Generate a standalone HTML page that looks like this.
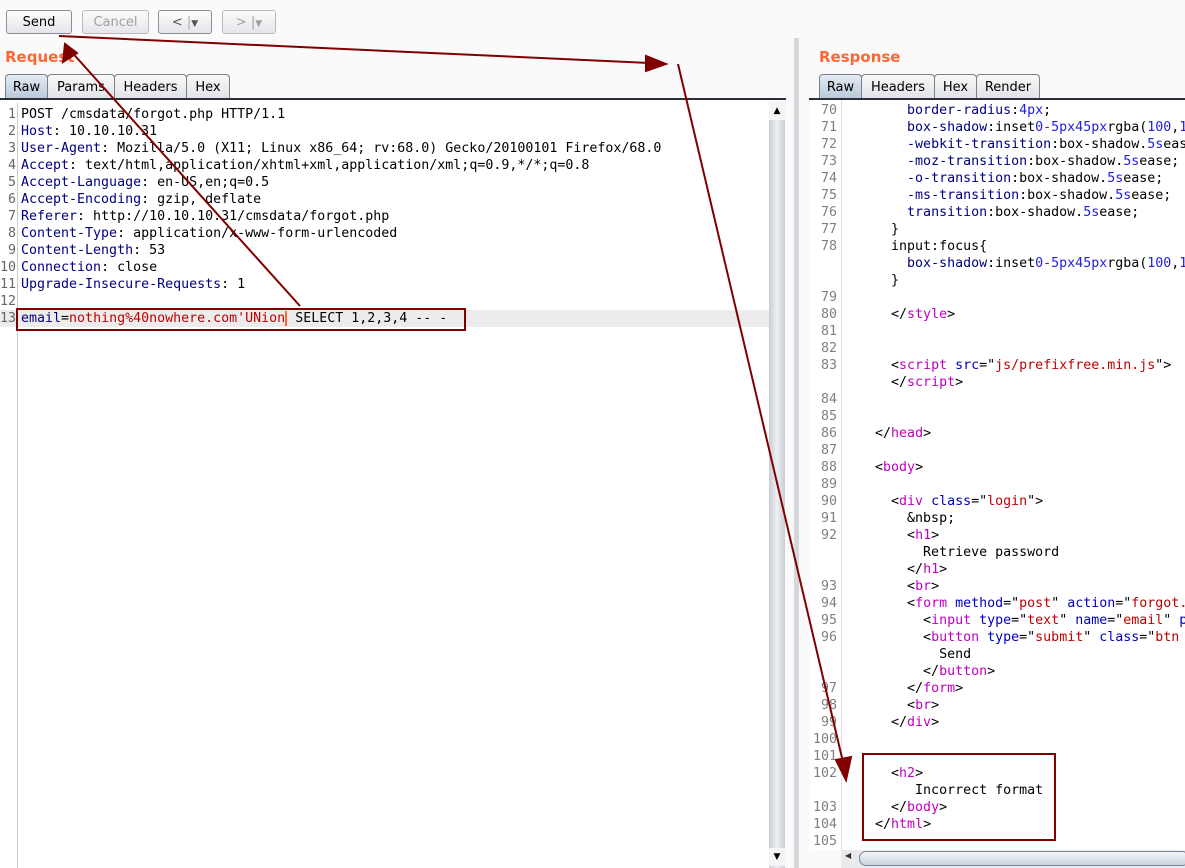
<!DOCTYPE html>
<html><head><meta charset="utf-8"><style>
*{margin:0;padding:0;box-sizing:border-box}
body{width:1185px;height:868px;background:#fafafa;font-family:"DejaVu Sans","Liberation Sans",sans-serif;position:relative;overflow:hidden;font-size:13px;color:#000}
.btn{position:absolute;top:10px;height:24px;border:1px solid #8a8f97;border-radius:3px;background:linear-gradient(#fcfcfc,#e4e6ea);font-size:13px;text-align:center;line-height:24px}
.dis{color:#a0a0a0;border-color:#b8bcc2}
.h{position:absolute;top:48px;color:#ff6633;font-weight:bold;font-size:15px}
.tab{position:absolute;top:74px;height:25px;border:1px solid #7a7f88;border-bottom:none;border-radius:4px 4px 0 0;background:linear-gradient(#fafafa,#e0e2e6);font-size:13px;line-height:26px;text-align:center}
.sel{background:linear-gradient(#e4ecf4,#b7c8d8)}
.code{position:absolute;font-family:"DejaVu Sans Mono","Liberation Mono",monospace;font-size:13.3px;line-height:17px;white-space:pre}
.k{color:#000080}.n{color:#2020e0}.t{color:#c000c0}.a{color:#0000c0}.v{color:#c00000}
.num{color:#666;text-align:right}
</style></head><body>
<div class="btn" style="left:6px;width:66px">Send</div>
<div class="btn dis" style="left:82px;width:67px">Cancel</div>
<div class="btn" style="left:158px;width:54px;color:#555">&lt; <span style="color:#aaa">|</span><span style="font-size:9px">▼</span></div>
<div class="btn dis" style="left:222px;width:54px">&gt; |<span style="font-size:9px">▼</span></div>

<div class="h" style="left:5px">Request</div>
<div class="tab sel" style="left:5px;width:43px">Raw</div>
<div class="tab" style="left:47px;width:68px">Params</div>
<div class="tab" style="left:114px;width:73px">Headers</div>
<div class="tab" style="left:186px;width:44px">Hex</div>
<div style="position:absolute;left:0;top:98px;width:786px;height:2px;background:#2a2f3a"></div>
<div style="position:absolute;left:0;top:100px;width:769px;height:768px;background:#fff"></div>
<div style="position:absolute;left:17px;top:103px;width:1px;height:765px;background:#ccc"></div>
<div style="position:absolute;left:0;top:310px;width:769px;height:17px;background:#ececec"></div>
<div style="position:absolute;left:769px;top:102px;width:16px;height:766px;background:linear-gradient(90deg,#c9ccd2,#eef0f3,#c9ccd2)"></div>
<div style="position:absolute;left:769px;top:102px;width:16px;height:18px;background:#f4f4f4;font-size:9px;text-align:center;line-height:18px">▲</div>
<div style="position:absolute;left:769px;top:848px;width:16px;height:18px;background:#f4f4f4;font-size:9px;text-align:center;line-height:18px">▼</div>
<div class="code num" style="left:0;top:106px;width:16px">1
2
3
4
5
6
7
8
9
10
11
12
13</div>
<div class="code" style="left:21px;top:106px">POST /cmsdata/forgot.php HTTP/1.1
<span class="k">Host</span>: 10.10.10.31
<span class="k">User-Agent</span>: Mozilla/5.0 (X11; Linux x86_64; rv:68.0) Gecko/20100101 Firefox/68.0
<span class="k">Accept</span>: text/html,application/xhtml+xml,application/xml;q=0.9,*/*;q=0.8
<span class="k">Accept-Language</span>: en-US,en;q=0.5
<span class="k">Accept-Encoding</span>: gzip, deflate
<span class="k">Referer</span>: http://10.10.10.31/cmsdata/forgot.php
<span class="k">Content-Type</span>: application/x-www-form-urlencoded
<span class="k">Content-Length</span>: 53
<span class="k">Connection</span>: close
<span class="k">Upgrade-Insecure-Requests</span>: 1

<span class="k">email</span>=<span class="v">nothing%40nowhere.com'UNion</span><span style="border-left:2px solid #ff6633"></span> SELECT 1,2,3,4 -- -</div>
<div style="position:absolute;left:16px;top:308px;width:450px;height:23px;border:2px solid #800000"></div>

<div style="position:absolute;left:794px;top:38px;width:5px;height:830px;background:#d4d7dc"></div>
<div class="h" style="left:819px">Response</div>
<div class="tab sel" style="left:819px;width:43px">Raw</div>
<div class="tab" style="left:861px;width:74px">Headers</div>
<div class="tab" style="left:934px;width:43px">Hex</div>
<div class="tab" style="left:976px;width:64px">Render</div>
<div style="position:absolute;left:809px;top:98px;width:376px;height:2px;background:#2a2f3a"></div>
<div style="position:absolute;left:810px;top:100px;width:375px;height:750px;background:#fff"></div>
<div style="position:absolute;left:841px;top:100px;width:1px;height:750px;background:#ddd"></div>
<div style="position:absolute;left:841px;top:850px;width:344px;height:18px;background:#e8eaee"></div>
<div style="position:absolute;left:859px;top:851px;width:330px;height:15px;border:1px solid #7a8596;border-radius:7px;background:linear-gradient(#f4f6f9,#c9d3df)"></div>
<div style="position:absolute;left:845px;top:851px;font-size:8px;color:#333">◀</div>
<div class="code num" style="left:810px;top:102px;width:27px;color:#808080">70
71
72
73
74
75
76
77
78


79
80
81
82
83

84
85
86
87
88
89
90
91
92


93
94
95
96


97
98
99
100
101
102

103
104
105</div>
<div class="code" style="left:843px;top:102px">        <span class="k">border-radius</span>:<span class="n">4px</span>;
        <span class="k">box-shadow</span>:inset<span class="n">0-5px45px</span>rgba(<span class="n">100</span>,<span class="n">1</span>
        <span class="k">-webkit-transition</span>:box-shadow.<span class="n">5s</span>ease;
        <span class="k">-moz-transition</span>:box-shadow.<span class="n">5s</span>ease;
        <span class="k">-o-transition</span>:box-shadow.<span class="n">5s</span>ease;
        <span class="k">-ms-transition</span>:box-shadow.<span class="n">5s</span>ease;
        <span class="k">transition</span>:box-shadow.<span class="n">5s</span>ease;
      }
      input:focus{
        <span class="k">box-shadow</span>:inset<span class="n">0-5px45px</span>rgba(<span class="n">100</span>,<span class="n">1</span>
      }

      &lt;/<span class="t">style</span>&gt;


      &lt;<span class="t">script</span> <span class="a">src</span>="<span class="v">js/prefixfree.min.js</span>"&gt;
      &lt;/<span class="t">script</span>&gt;


    &lt;/<span class="t">head</span>&gt;

    &lt;<span class="t">body</span>&gt;

      &lt;<span class="t">div</span> <span class="a">class</span>="<span class="v">login</span>"&gt;
        &amp;nbsp;
        &lt;<span class="t">h1</span>&gt;
          Retrieve password
        &lt;/<span class="t">h1</span>&gt;
        &lt;<span class="t">br</span>&gt;
        &lt;<span class="t">form</span> <span class="a">method</span>="<span class="v">post</span>" <span class="a">action</span>="<span class="v">forgot.</span>
          &lt;<span class="t">input</span> <span class="a">type</span>="<span class="v">text</span>" <span class="a">name</span>="<span class="v">email</span>" <span class="a">p</span>
          &lt;<span class="t">button</span> <span class="a">type</span>="<span class="v">submit</span>" <span class="a">class</span>="<span class="v">btn</span>
            Send
          &lt;/<span class="t">button</span>&gt;
        &lt;/<span class="t">form</span>&gt;
        &lt;<span class="t">br</span>&gt;
      &lt;/<span class="t">div</span>&gt;


      &lt;<span class="t">h2</span>&gt;
         Incorrect format
      &lt;/<span class="t">body</span>&gt;
    &lt;/<span class="t">html</span>&gt;
</div>
<div style="position:absolute;left:862px;top:753px;width:194px;height:88px;border:2px solid #800000"></div>

<svg width="1185" height="868" style="position:absolute;left:0;top:0">
<g stroke="#800000" stroke-width="2" fill="none">
<line x1="300" y1="306" x2="68" y2="48" />
<path d="M65,44 L63,62 L77,53 Z" fill="#800000"/>
<line x1="59" y1="36" x2="650" y2="63"/>
<path d="M666,64 L646,56 L646,71 Z" fill="#800000"/>
<line x1="678" y1="64" x2="843" y2="762"/>
<path d="M846,780 L836,760 L851,757 Z" fill="#800000"/>
</g></svg>
</body></html>
